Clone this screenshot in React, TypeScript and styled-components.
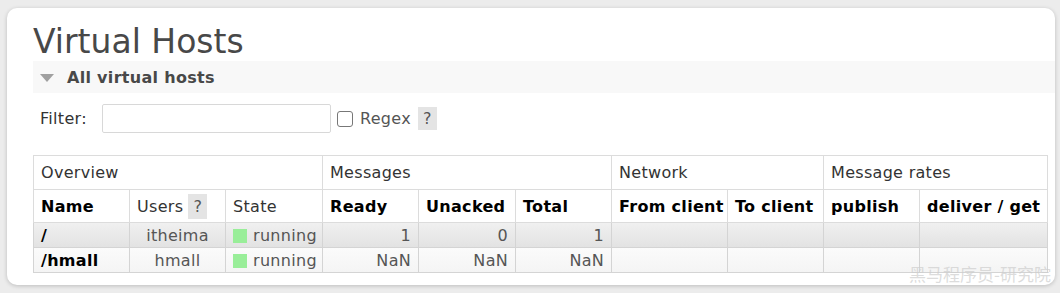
import React from "react";
import styled, { createGlobalStyle } from "styled-components";

const GlobalStyle = createGlobalStyle`
  html, body {
    margin: 0;
    padding: 0;
    background: #ececec;
    font-family: "DejaVu Sans", Verdana, sans-serif;
    color: #484848;
  }
`;

type Host = {
  name: string;
  users: string;
  state: string;
  ready: string;
  unacked: string;
  total: string;
};

const hosts: Host[] = [
  { name: "/", users: "itheima", state: "running", ready: "1", unacked: "0", total: "1" },
  { name: "/hmall", users: "hmall", state: "running", ready: "NaN", unacked: "NaN", total: "NaN" },
];

const widths = [96, 96, 97, 96, 97, 96, 116, 96, 96, 128];

export default function App() {
  return (
    <>
      <GlobalStyle />
      <Page>
        <Card>
          <Title>Virtual Hosts</Title>
          <SectionBar>
            <Triangle />
            <SectionTitle>All virtual hosts</SectionTitle>
          </SectionBar>
          <FilterRow>
            <FilterLabel>Filter:</FilterLabel>
            <FilterInput />
            <CheckBox />
            <RegexLabel>Regex</RegexLabel>
            <Help>?</Help>
          </FilterRow>
          <Table>
            <colgroup>
              {widths.map((w, i) => (
                <col key={i} style={{ width: w }} />
              ))}
            </colgroup>
            <thead>
              <tr>
                <GroupCell colSpan={3}>Overview</GroupCell>
                <GroupCell colSpan={3}>Messages</GroupCell>
                <GroupCell colSpan={2}>Network</GroupCell>
                <GroupCell colSpan={2}>Message rates</GroupCell>
              </tr>
              <tr>
                <HeadCell>Name</HeadCell>
                <HeadCell $plain>
                  <HeadInline>
                    Users<HeadHelp>?</HeadHelp>
                  </HeadInline>
                </HeadCell>
                <HeadCell $plain>State</HeadCell>
                <HeadCell>Ready</HeadCell>
                <HeadCell>Unacked</HeadCell>
                <HeadCell>Total</HeadCell>
                <HeadCell>From client</HeadCell>
                <HeadCell>To client</HeadCell>
                <HeadCell>publish</HeadCell>
                <HeadCell>deliver / get</HeadCell>
              </tr>
            </thead>
            <tbody>
              {hosts.map((h, i) => (
                <Row key={h.name} $alt={i % 2 === 1}>
                  <NameCell>{h.name}</NameCell>
                  <CenterCell>{h.users}</CenterCell>
                  <Cell>
                    <StateBox />
                    {h.state}
                  </Cell>
                  <NumCell>{h.ready}</NumCell>
                  <NumCell>{h.unacked}</NumCell>
                  <NumCell>{h.total}</NumCell>
                  <Cell />
                  <Cell />
                  <Cell />
                  <Cell />
                </Row>
              ))}
            </tbody>
          </Table>
          <Watermark>黑马程序员-研究院</Watermark>
        </Card>
      </Page>
    </>
  );
}

const Page = styled.div`
  padding: 8px 5px 8px 7px;
  height: 293px;
  box-sizing: border-box;
`;

const Card = styled.div`
  position: relative;
  background: #fff;
  border-radius: 10px;
  box-shadow: 0 1px 4px rgba(0, 0, 0, 0.2);
  height: 277px;
  width: 1048px;
  box-sizing: border-box;
  padding: 0 0 0 26px;
  overflow: hidden;
  font-size: 16px;
  letter-spacing: 0.3px;
`;

const Title = styled.h1`
  margin: 0;
  padding-top: 14px;
  font-size: 33px;
  line-height: 39px;
  font-weight: normal;
  letter-spacing: 0;
  color: #484848;
`;

const SectionBar = styled.div`
  display: flex;
  align-items: center;
  height: 32px;
  background: #f8f8f8;
`;

const Triangle = styled.span`
  width: 0;
  height: 0;
  margin: 2px 13px 0 7px;
  border-left: 7px solid transparent;
  border-right: 7px solid transparent;
  border-top: 8px solid #a0a0a0;
`;

const SectionTitle = styled.span`
  font-weight: bold;
  color: #484848;
`;

const FilterRow = styled.div`
  display: flex;
  align-items: center;
  height: 29px;
  margin-top: 11px;
  padding-left: 7px;
`;

const FilterLabel = styled.span`
  color: #333;
  width: 62px;
`;

const FilterInput = styled.div`
  width: 229px;
  height: 29px;
  box-sizing: border-box;
  border: 1px solid #d8d8d8;
  border-radius: 2px;
`;

const CheckBox = styled.span`
  width: 16px;
  height: 16px;
  box-sizing: border-box;
  margin-left: 6px;
  border: 1px solid #777;
  border-radius: 3px;
`;

const RegexLabel = styled.span`
  margin-left: 7px;
  color: #555;
`;

const Help = styled.span`
  margin-left: 7px;
  width: 19px;
  height: 23px;
  display: inline-flex;
  align-items: center;
  justify-content: center;
  background: #e4e4e4;
  color: #555;
`;

const Table = styled.table`
  margin-top: 22px;
  border-collapse: collapse;
  table-layout: fixed;
  width: 1015px;
`;

const GroupCell = styled.th`
  height: 33px;
  padding: 0 7px;
  text-align: left;
  font-weight: normal;
  color: #333;
  border: 1px solid #dcdcdc;
  white-space: nowrap;
`;

const HeadCell = styled.th<{ $plain?: boolean }>`
  height: 32px;
  padding: 0 7px;
  text-align: left;
  font-weight: ${(p) => (p.$plain ? "normal" : "bold")};
  color: ${(p) => (p.$plain ? "#333" : "#000")};
  border: 1px solid #dcdcdc;
  white-space: nowrap;
  overflow: hidden;
`;

const HeadInline = styled.span`
  display: flex;
  align-items: center;
  gap: 5px;
`;

const HeadHelp = styled.span`
  display: inline-flex;
  align-items: center;
  justify-content: center;
  width: 19px;
  height: 25px;
  background: #e4e4e4;
  color: #555;
`;

const Row = styled.tr<{ $alt: boolean }>`
  background: ${(p) =>
    p.$alt
      ? "linear-gradient(#fbfbfb, #f4f4f4)"
      : "linear-gradient(#f0f0f0, #e2e2e2)"};
`;

const Cell = styled.td`
  height: 24px;
  padding: 0 7px;
  border: 1px solid #d4d4d4;
  color: #555;
  white-space: nowrap;
`;

const NameCell = styled(Cell)`
  font-weight: bold;
  color: #000;
`;

const CenterCell = styled(Cell)`
  text-align: center;
`;

const NumCell = styled(Cell)`
  text-align: right;
`;

const StateBox = styled.span`
  display: inline-block;
  width: 14px;
  height: 14px;
  margin-right: 6px;
  background: #99ee99;
  vertical-align: -2px;
`;

const Watermark = styled.span`
  position: absolute;
  right: 4px;
  bottom: 1px;
  font-family: "Noto Sans CJK SC", sans-serif;
  font-size: 17px;
  line-height: 20px;
  letter-spacing: 0;
  color: rgba(205, 205, 205, 0.7);
`;
